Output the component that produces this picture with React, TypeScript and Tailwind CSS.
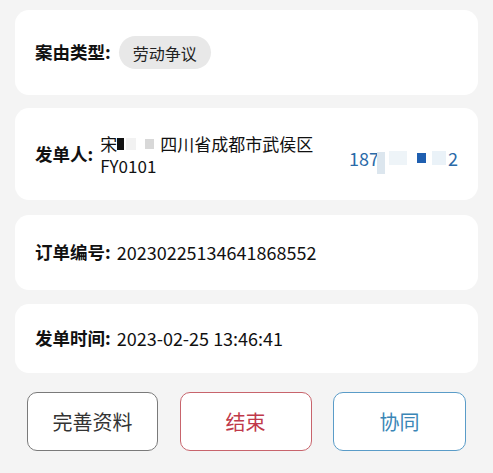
import React from "react";

const font = { fontFamily: '"Noto Sans CJK SC", "Noto Sans", sans-serif' };

function Card({ className = "", children }: { className?: string; children: React.ReactNode }) {
  return <div className={`mx-[15px] bg-white rounded-[14px] px-5 flex items-center ${className}`}>{children}</div>;
}

export default function App() {
  return (
    <div className="w-[493px] h-[473px] bg-[#f4f4f4] pt-[10px] text-[17.5px] text-[#111] overflow-hidden" style={font}>
      <Card className="h-[85px]">
        <span className="font-bold">案由类型:</span>
        <span className="ml-[8px] h-[33px] px-[14px] rounded-full bg-[#e8e8e8] text-[16px] text-[#222] flex items-center">劳动争议</span>
      </Card>

      <Card className="h-[92px] mt-[13px]">
        <span className="font-bold">发单人:</span>
        <div className="ml-[7px] text-[17px] leading-[22px] mt-[2px]">
          <div className="flex items-center h-[22px]">
            <span>宋</span>
            <span className="inline-block w-[7px] h-[12px] bg-[#111]"></span>
            <span className="inline-block w-[10px] h-[12px] bg-[#f2f2f2] ml-[2px]"></span>
            <span className="inline-block w-[9px] h-[10px] bg-[#d8d8d8] ml-[9px]"></span>
            <span className="ml-[6px]">四川省成都市武侯区</span>
          </div>
          <div className="h-[22px]">FY0101</div>
        </div>
        <div className="ml-auto flex items-center text-[#2a6aa8] text-[18px] mt-[8px]">
          <span>187</span>
          <span className="inline-block w-[8px] h-[22px] bg-[#dce6ee] -ml-[2px] mt-[10px]"></span>
          <span className="inline-block w-[18px] h-[14px] bg-[#eef4f8] ml-[4px]"></span>
          <span className="inline-block w-[9px] h-[10px] bg-[#1f5fb0] ml-[10px]"></span>
          <span className="inline-block w-[14px] h-[14px] bg-[#eaf2f8] ml-[6px]"></span>
          <span className="ml-[2px]">2</span>
        </div>
      </Card>

      <Card className="h-[75px] mt-[15px]">
        <span className="font-bold">订单编号:</span>
        <span className="ml-[6px] text-[18px]">20230225134641868552</span>
      </Card>

      <Card className="h-[69px] mt-[14px]">
        <span className="font-bold">发单时间:</span>
        <span className="ml-[6px] text-[18px]">2023-02-25 13:46:41</span>
      </Card>

      <div className="mt-[19px] px-[27px] flex justify-between text-[20px]">
        <button className="w-[131px] h-[59px] rounded-[10px] border-[1.5px] border-[#7a7a7a] bg-white text-[#333]">完善资料</button>
        <button className="w-[132px] h-[59px] rounded-[10px] border-[1.5px] border-[#c8646c] bg-white text-[#c0394a]">结束</button>
        <button className="w-[133px] h-[59px] rounded-[10px] border-[1.5px] border-[#5a9cc8] bg-white text-[#3a86b6]">协同</button>
      </div>
    </div>
  );
}
